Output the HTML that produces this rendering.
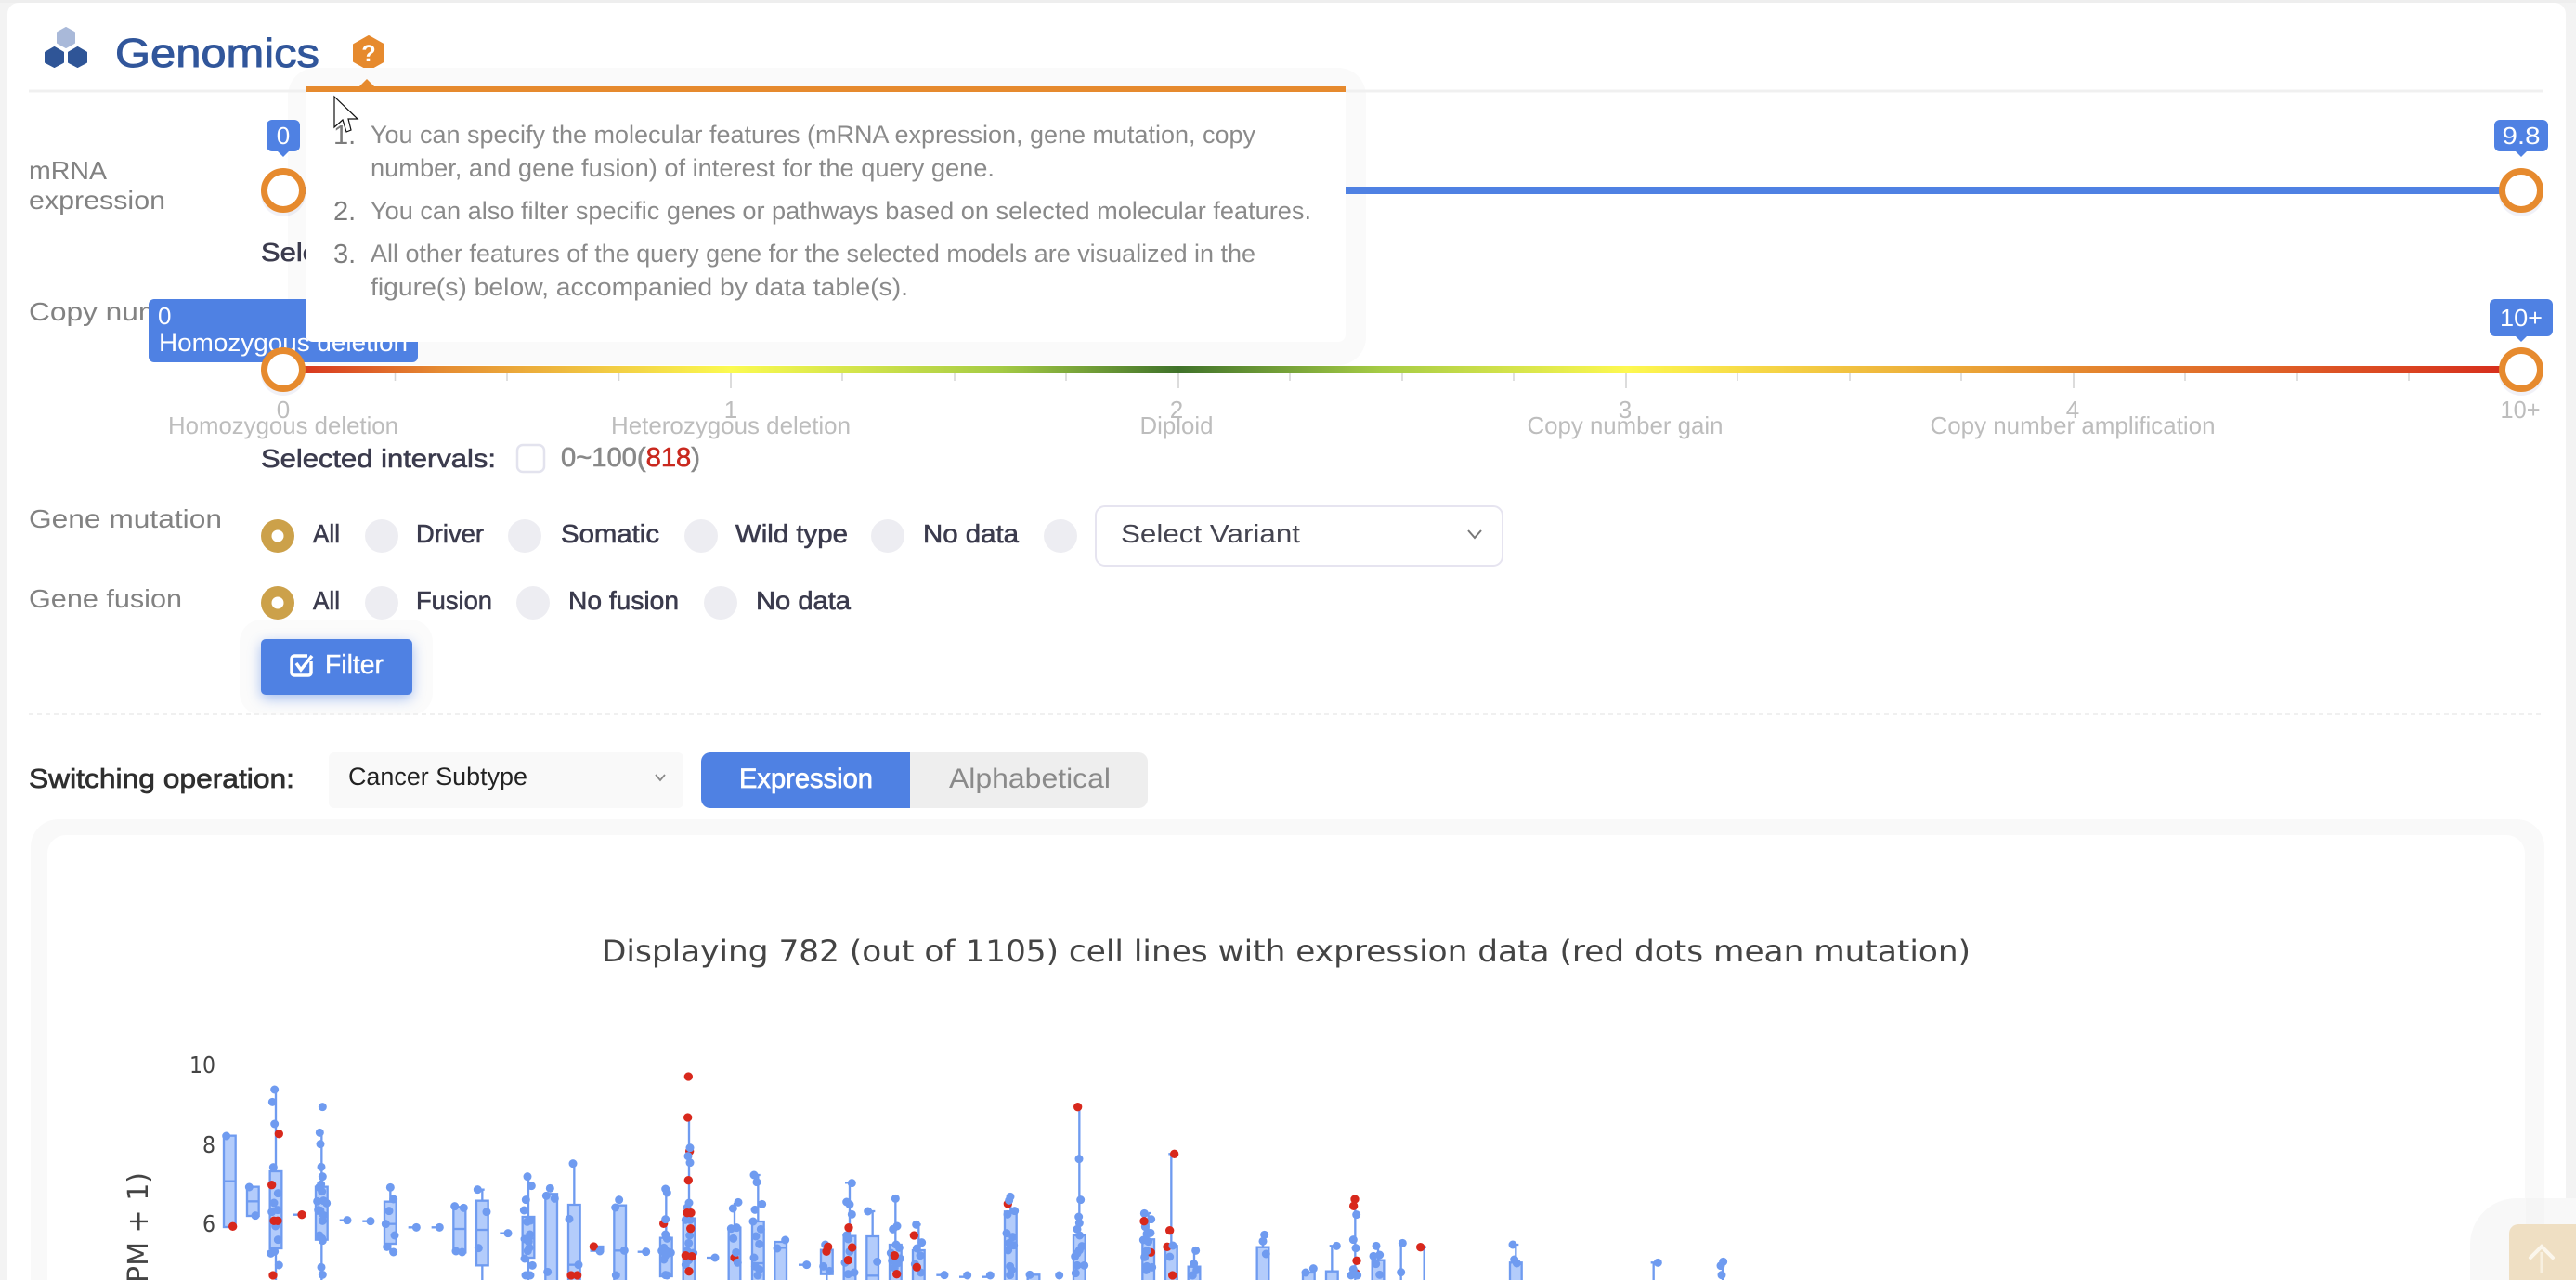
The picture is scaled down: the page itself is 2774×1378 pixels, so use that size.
<!DOCTYPE html>
<html lang="en">
<head>
<meta charset="utf-8">
<title>Genomics</title>
<style>
html,body{margin:0;padding:0;background:#f2f2f2;width:2774px;height:1378px;overflow:hidden}
svg{display:block;position:absolute;left:0;top:0}
text{font-family:"Liberation Sans",Arial,sans-serif}
.lab{font-size:28px;fill:#828282}
.opt{font-size:28px;fill:#3b3b4d;stroke:#3b3b4d;stroke-width:.6px}
.pop{font-size:27px;fill:#8a8a8a}
.num{font-size:29px;fill:#7c7c7c}
.mk{font-size:26px;fill:#bdbdbd;text-anchor:middle}
.tip{font-size:26px;fill:#fff}
.ch{font-family:"DejaVu Sans",sans-serif;fill:#444}
.b{fill:#b3ccfb;stroke:#6f9bf0;stroke-width:7}
.w{fill:none;stroke:#6f9bf0;stroke-width:7}
.d{fill:none;stroke:#6f9bf0;stroke-width:27;stroke-linecap:round}
.r{fill:none;stroke:#d8281c;stroke-width:28;stroke-linecap:round}
</style>
</head>
<body>
<svg width="2774" height="1378" viewBox="0 0 2774 1378" xmlns="http://www.w3.org/2000/svg">
<defs>
<linearGradient id="cn" gradientUnits="userSpaceOnUse" x1="305" y1="0" x2="2715" y2="0">
<stop offset="0" stop-color="#d62b1c"/>
<stop offset=".07" stop-color="#e58b32"/>
<stop offset=".2" stop-color="#fbfa50"/>
<stop offset=".32" stop-color="#a5cb45"/>
<stop offset=".4" stop-color="#40722a"/>
<stop offset=".49" stop-color="#a5cb45"/>
<stop offset=".6" stop-color="#fdf850"/>
<stop offset=".8" stop-color="#e58a30"/>
<stop offset="1" stop-color="#d62b1c"/>
</linearGradient>
<filter id="bl" x="-30%" y="-50%" width="160%" height="200%"><feGaussianBlur stdDeviation="7"/></filter>
</defs>

<!-- page + card -->
<rect x="0" y="0" width="2774" height="1378" fill="#f3f3f3"/>
<rect x="0" y="0" width="2774" height="3" fill="#eeeeee"/>
<path d="M8 1378V15a12 12 0 0 1 12-12H2751a12 12 0 0 1 12 12V1378Z" fill="#ffffff"/>

<!-- heading -->
<polygon points="71,30 80,35 80,46 71,51 62,46 62,35" fill="#a9b9d9" stroke="#a9b9d9" stroke-width="2" stroke-linejoin="round"/>
<polygon points="58.500,51 68,56.500 68,67 58.500,72 49,67 49,56.500" fill="#2f5597" stroke="#2f5597" stroke-width="2" stroke-linejoin="round"/>
<polygon points="83.500,51 93,56.500 93,67 83.500,72 74,67 74,56.500" fill="#2f5597" stroke="#2f5597" stroke-width="2" stroke-linejoin="round"/>
<text x="124" y="72" font-size="44" fill="#31569b" stroke="#31569b" stroke-width=".9" textLength="220" lengthAdjust="spacingAndGlyphs">Genomics</text>
<polygon points="397,39 413,48 413,66 397,75 381,66 381,48" fill="#e68a2e" stroke="#e68a2e" stroke-width="2" stroke-linejoin="round"/>
<text x="397" y="66" font-size="25" font-weight="bold" fill="#fff" text-anchor="middle">?</text>

<!-- popover halo -->
<rect x="310" y="73" width="1161" height="320" rx="30" fill="#fafafa"/>
<rect x="31" y="96.500" width="2708" height="3" fill="#f0f0f0"/>

<!-- mRNA -->
<text class="lab" x="31" y="193" textLength="84" lengthAdjust="spacingAndGlyphs">mRNA</text>
<text class="lab" x="31" y="225" textLength="147" lengthAdjust="spacingAndGlyphs">expression</text>
<rect x="305" y="201" width="2410" height="8" fill="#4f81e3"/>
<rect x="287" y="129" width="36" height="34" rx="6" fill="#4f81e3"/>
<polygon points="299,163 311,163 305,169" fill="#4f81e3"/>
<text class="tip" x="305" y="155" text-anchor="middle">0</text>
<rect x="2686" y="129" width="58" height="34" rx="6" fill="#4f81e3"/>
<polygon points="2709,163 2721,163 2715,169" fill="#4f81e3"/>
<text class="tip" x="2715" y="155" text-anchor="middle" textLength="41" lengthAdjust="spacingAndGlyphs">9.8</text>
<text class="opt" x="281" y="281" textLength="253" lengthAdjust="spacingAndGlyphs">Selected intervals:</text>
<circle cx="305" cy="209" r="24" fill="#8a8ac0" opacity=".12"/>
<circle cx="305" cy="205" r="20.500" fill="#fff" stroke="#e68a2e" stroke-width="7"/>
<circle cx="2715" cy="209" r="24" fill="#8a8ac0" opacity=".12"/>
<circle cx="2715" cy="205" r="20.500" fill="#fff" stroke="#e68a2e" stroke-width="7"/>

<!-- Copy number -->
<text class="lab" x="31" y="345" textLength="190" lengthAdjust="spacingAndGlyphs">Copy number</text>
<rect x="305" y="394" width="2410" height="8" fill="url(#cn)"/>
<path d="M425.500 402v8M546 402v8M666.500 402v8M907 402v8M1028 402v8M1148 402v8M1389 402v8M1510 402v8M1630 402v8M1871 402v8M1992 402v8M2112 402v8M2353 402v8M2474 402v8M2594 402v8" stroke="#d6d6d6" stroke-width="1.500" fill="none"/>
<path d="M787 402v16M1269 402v16M1751 402v16M2233 402v16" stroke="#d0d0d0" stroke-width="1.500" fill="none"/>
<text class="mk" x="305" y="450">0</text><text class="mk" x="787" y="450">1</text><text class="mk" x="1267" y="450">2</text><text class="mk" x="1750" y="450">3</text><text class="mk" x="2232" y="450">4</text><text class="mk" x="2714" y="450" textLength="43" lengthAdjust="spacingAndGlyphs">10+</text>
<text class="mk" x="305" y="467" textLength="248" lengthAdjust="spacingAndGlyphs">Homozygous deletion</text>
<text class="mk" x="787" y="467" textLength="258" lengthAdjust="spacingAndGlyphs">Heterozygous deletion</text>
<text class="mk" x="1267" y="467" textLength="79" lengthAdjust="spacingAndGlyphs">Diploid</text>
<text class="mk" x="1750" y="467" textLength="211" lengthAdjust="spacingAndGlyphs">Copy number gain</text>
<text class="mk" x="2232" y="467" textLength="307" lengthAdjust="spacingAndGlyphs">Copy number amplification</text>

<rect x="160" y="322" width="290" height="68" rx="6" fill="#4f81e3"/>
<text x="170" y="349" font-size="26" fill="#fff">0</text>
<text x="171" y="378" font-size="27" fill="#fff" textLength="268" lengthAdjust="spacingAndGlyphs">Homozygous deletion</text>
<rect x="2681" y="322" width="68" height="40" rx="6" fill="#4f81e3"/>
<polygon points="2709,362 2721,362 2715,368" fill="#4f81e3"/>
<text class="tip" x="2715" y="351" text-anchor="middle" textLength="46" lengthAdjust="spacingAndGlyphs">10+</text>

<!-- popover -->
<path d="M329 99H1449V360a8 8 0 0 1-8 8H337a8 8 0 0 1-8-8Z" fill="#fff"/>
<rect x="329" y="93" width="1120" height="6" fill="#e68a2e"/>
<polygon points="395,85 387,93 403,93" fill="#e68a2e"/>
<text class="num" x="359" y="155">1.</text>
<text class="num" x="359" y="237">2.</text>
<text class="num" x="359" y="283">3.</text>
<text class="pop" x="399" y="154" textLength="953" lengthAdjust="spacingAndGlyphs">You can specify the molecular features (mRNA expression, gene mutation, copy</text>
<text class="pop" x="399" y="190" textLength="672" lengthAdjust="spacingAndGlyphs">number, and gene fusion) of interest for the query gene.</text>
<text class="pop" x="399" y="236" textLength="1013" lengthAdjust="spacingAndGlyphs">You can also filter specific genes or pathways based on selected molecular features.</text>
<text class="pop" x="399" y="282" textLength="953" lengthAdjust="spacingAndGlyphs">All other features of the query gene for the selected models are visualized in the</text>
<text class="pop" x="399" y="318" textLength="579" lengthAdjust="spacingAndGlyphs">figure(s) below, accompanied by data table(s).</text>
<polygon points="360,104 360,137 369,129 373,142 378,140 375,128 385,128" fill="#fff" stroke="#111" stroke-width="1.200"/>

<circle cx="305" cy="402" r="24" fill="#8a8ac0" opacity=".12"/>
<circle cx="305" cy="398" r="20.500" fill="#fff" stroke="#e68a2e" stroke-width="7"/>
<circle cx="2715" cy="402" r="24" fill="#8a8ac0" opacity=".12"/>
<circle cx="2715" cy="398" r="20.500" fill="#fff" stroke="#e68a2e" stroke-width="7"/>

<!-- selected intervals row -->
<text class="opt" x="281" y="503" textLength="253" lengthAdjust="spacingAndGlyphs">Selected intervals:</text>
<rect x="557" y="479" width="29" height="29" rx="6" fill="#fff" stroke="#e3e3ee" stroke-width="2.500"/>
<text x="604" y="502" font-size="29" fill="#888" stroke="#888" stroke-width=".6" textLength="150" lengthAdjust="spacingAndGlyphs">0~100(<tspan fill="#c9281e" stroke="#c9281e">818</tspan>)</text>

<!-- gene mutation -->
<text class="lab" x="31" y="568" textLength="208" lengthAdjust="spacingAndGlyphs">Gene mutation</text>
<circle cx="299" cy="577" r="18" fill="#cca14a"/><circle cx="299" cy="577" r="6.500" fill="#fff"/>
<text class="opt" x="337" y="584" textLength="29" lengthAdjust="spacingAndGlyphs">All</text>
<circle cx="411" cy="577" r="18" fill="#ededf2"/>
<text class="opt" x="448" y="584" textLength="73" lengthAdjust="spacingAndGlyphs">Driver</text>
<circle cx="565" cy="577" r="18" fill="#ededf2"/>
<text class="opt" x="604" y="584" textLength="106" lengthAdjust="spacingAndGlyphs">Somatic</text>
<circle cx="755" cy="577" r="18" fill="#ededf2"/>
<text class="opt" x="792" y="584" textLength="121" lengthAdjust="spacingAndGlyphs">Wild type</text>
<circle cx="956" cy="577" r="18" fill="#ededf2"/>
<text class="opt" x="994" y="584" textLength="103" lengthAdjust="spacingAndGlyphs">No data</text>
<circle cx="1142" cy="577" r="18" fill="#ededf2"/>
<rect x="1180" y="545" width="438" height="64" rx="10" fill="#fff" stroke="#e6e4f0" stroke-width="2"/>
<text x="1207" y="584" font-size="28" fill="#444450" textLength="193" lengthAdjust="spacingAndGlyphs">Select Variant</text>
<path d="M1581 571l7 8 7-8" fill="none" stroke="#777" stroke-width="2"/>

<!-- gene fusion -->
<text class="lab" x="31" y="654" textLength="165" lengthAdjust="spacingAndGlyphs">Gene fusion</text>
<circle cx="299" cy="649" r="18" fill="#cca14a"/><circle cx="299" cy="649" r="6.500" fill="#fff"/>
<text class="opt" x="337" y="656" textLength="29" lengthAdjust="spacingAndGlyphs">All</text>
<circle cx="411" cy="649" r="18" fill="#ededf2"/>
<text class="opt" x="448" y="656" textLength="82" lengthAdjust="spacingAndGlyphs">Fusion</text>
<circle cx="574" cy="649" r="18" fill="#ededf2"/>
<text class="opt" x="612" y="656" textLength="119" lengthAdjust="spacingAndGlyphs">No fusion</text>
<circle cx="776" cy="649" r="18" fill="#ededf2"/>
<text class="opt" x="814" y="656" textLength="102" lengthAdjust="spacingAndGlyphs">No data</text>

<!-- filter -->
<rect x="258" y="667" width="208" height="103" rx="24" fill="#fbfbfb"/>
<rect x="281" y="692" width="163" height="60" rx="6" fill="#4f81e3" opacity=".5" filter="url(#bl)"/>
<rect x="281" y="688" width="163" height="60" rx="5" fill="#4f81e3"/>
<path d="M335 712V724a3 3 0 0 1-3 3H317a3 3 0 0 1-3-3V709a3 3 0 0 1 3-3H331" fill="none" stroke="#fff" stroke-width="3.500"/>
<path d="M319 714l5 7 12-15" fill="none" stroke="#fff" stroke-width="3.500"/>
<text x="350" y="725" font-size="29" fill="#fff" stroke="#fff" stroke-width=".4" textLength="63" lengthAdjust="spacingAndGlyphs">Filter</text>

<path d="M31 769H2739" stroke="#ececec" stroke-width="1.500" stroke-dasharray="5 4" fill="none"/>

<!-- switching -->
<text x="31" y="848" font-size="29" fill="#2f2f2f" stroke="#2f2f2f" stroke-width=".7" textLength="286" lengthAdjust="spacingAndGlyphs">Switching operation:</text>
<rect x="354" y="810" width="382" height="60" rx="6" fill="#f9f9f9"/>
<text x="375" y="845" font-size="27" fill="#222" textLength="193" lengthAdjust="spacingAndGlyphs">Cancer Subtype</text>
<path d="M706 834l5 6 5-6" fill="none" stroke="#888" stroke-width="1.800"/>
<path d="M765 810H980V870H765a10 10 0 0 1-10-10V820a10 10 0 0 1 10-10Z" fill="#4f81e3"/>
<path d="M980 810H1226a10 10 0 0 1 10 10V860a10 10 0 0 1-10 10H980Z" fill="#eeeeee"/>
<text x="796" y="848" font-size="30" fill="#fff" stroke="#fff" stroke-width=".7" textLength="144" lengthAdjust="spacingAndGlyphs">Expression</text>
<text x="1022" y="848" font-size="30" fill="#8a8a8a" textLength="174" lengthAdjust="spacingAndGlyphs">Alphabetical</text>

<!-- chart container -->
<path d="M33 1378V912a30 30 0 0 1 30-30H2710a30 30 0 0 1 30 30V1378Z" fill="#f9f9f9"/>
<path d="M51 1378V919a20 20 0 0 1 20-20H2699a20 20 0 0 1 20 20V1378Z" fill="#fff"/>

<text class="ch" x="648" y="1035" font-size="32" textLength="1474" lengthAdjust="spacingAndGlyphs">Displaying 782 (out of 1105) cell lines with expression data (red dots mean mutation)</text>
<text class="ch" x="232" y="1155" font-size="25" text-anchor="end" textLength="28" lengthAdjust="spacingAndGlyphs">10</text>
<text class="ch" x="232" y="1241" font-size="25" text-anchor="end" textLength="14" lengthAdjust="spacingAndGlyphs">8</text>
<text class="ch" x="232" y="1326" font-size="25" text-anchor="end" textLength="14" lengthAdjust="spacingAndGlyphs">6</text>
<text class="ch" transform="translate(159,1262) rotate(-90)" font-size="30" text-anchor="end" xml:space="preserve">PM + 1)</text>

<!-- chart A -->
<g transform="translate(100,1130) scale(.33333)">
<path class="w" d="M591 130V744M739 268V744M961 445V491M961 627V655M1258 452V744M1240 452H1265M1407 410V744M647 533H675M797 551H822M871 554H897M1019 574H1045M1094 574H1120M1315 593H1341"/>
<rect class="b" x="423" y="278" width="38" height="295"/><path class="w" d="M423 425H461"/>
<rect class="b" x="498" y="443" width="38" height="94"/><path class="w" d="M498 490H536"/>
<rect class="b" x="572" y="393" width="38" height="249"/><path class="w" d="M572 520H610"/>
<rect class="b" x="720" y="443" width="38" height="171"/><path class="w" d="M720 530H758"/>
<rect class="b" x="942" y="491" width="38" height="136"/><path class="w" d="M942 563H980"/>
<rect class="b" x="1165" y="508" width="39" height="147"/><path class="w" d="M1165 579H1204"/>
<rect class="b" x="1239" y="488" width="38" height="209"/><path class="w" d="M1239 582H1277"/>
<rect class="b" x="1388" y="540" width="38" height="132"/><path class="w" d="M1388 610H1426"/>
<path class="b" d="M1462 744V466H1500V744"/>
<path class="d" d="M431 279h0M505 444h0M525 536h0M587 129h0M580 169h0M587 240h0M583 380h0M598 464h0M585 495h0M578 524h0M597 518h0M590 570h0M598 614h0M575 658h0M587 652h0M601 696h0M742 185h0M733 268h0M735 305h0M738 379h0M742 410h0M737 435h0M731 445h0M740 458h0M725 490h0M745 488h0M755 496h0M728 518h0M735 520h0M745 535h0M742 553h0M732 600h0M740 610h0M742 617h0M738 703h0M742 727h0M822 551h0M897 554h0M961 445h0M971 483h0M957 521h0M946 563h0M975 600h0M950 637h0M971 654h0M1045 574h0M1120 574h0M1169 506h0M1198 511h0M1173 651h0M1193 654h0M1243 452h0M1272 524h0M1246 641h0M1341 593h0M1404 410h0M1417 440h0M1399 485h0M1393 519h0M1403 556h0M1414 552h0M1395 612h0M1412 597h0M1408 620h0M1410 640h0M1405 650h0M1395 675h0M1420 697h0M1398 729h0M1413 729h0M1477 448h0M1465 472h0M1492 481h0M1469 718h0"/>
<path class="r" d="M452 571h0M601 272h0M578 437h0M585 553h0M597 553h0M582 729h0M675 533h0"/>
</g>

<!-- chart B -->
<g transform="translate(600,1130) scale(.33333)">
<path class="w" d="M55 368V501M352 450V608M426 219V744M573 495V575M573 493H592M649 405V555M630 405H656M871 725V744M945 430V602M930 430H960M1019 522V603M1000 522H1027M1093 481V630M1168 565V648M1150 565H1175M1225 728H1251M1299 734H1325M1373 734H1399M483 672H510M780 695H806M260 653H287M1465 475V523"/>
<path class="b" d="M36 744V501H74V744"/><path class="w" d="M36 695H74"/>
<rect class="b" x="110" y="636" width="38" height="14"/>
<path class="b" d="M184 744V503H222V744"/><path class="w" d="M184 649H222"/>
<rect class="b" x="333" y="608" width="38" height="124"/>
<path class="b" d="M407 744V545H445V744"/>
<path class="b" d="M554 744V575H592V744"/>
<path class="b" d="M630 744V555H668V744"/><path class="w" d="M630 690H668"/>
<path class="b" d="M703 744V621H741V744"/><path class="w" d="M703 640H741"/>
<rect class="b" x="852" y="647" width="38" height="78"/>
<path class="b" d="M926 744V602H964V744"/>
<path class="b" d="M1000 744V603H1038V744"/><path class="w" d="M1000 730H1038"/>
<path class="b" d="M1074 744V630H1112V744"/>
<path class="b" d="M1149 744V648H1187V744"/>
<path class="b" d="M1446 744V523H1484V744"/>
<path class="r" d="M45 729h0M65 729h0M118 636h0M344 562h0M424 87h0M422 219h0M428 328h0M424 422h0M573 672h0M1456 498h0"/>
<path class="d" d="M51 368h0M39 547h0M69 695h0M138 651h0M200 485h0M188 510h0M217 649h0M190 729h0M287 653h0M350 450h0M355 462h0M350 548h0M350 597h0M355 610h0M345 640h0M352 650h0M367 656h0M338 650h0M350 665h0M345 678h0M350 728h0M355 729h0M429 317h0M423 344h0M429 365h0M426 495h0M420 510h0M415 550h0M430 550h0M428 600h0M425 625h0M440 657h0M420 650h0M415 695h0M425 680h0M510 672h0M585 493h0M568 513h0M562 578h0M580 575h0M569 610h0M578 655h0M583 688h0M636 405h0M645 428h0M662 499h0M639 517h0M633 555h0M658 580h0M642 603h0M653 628h0M636 672h0M640 700h0M653 710h0M648 729h0M737 615h0M711 642h0M806 695h0M866 630h0M860 700h0M880 715h0M952 431h0M935 492h0M945 500h0M952 532h0M935 600h0M940 612h0M945 652h0M930 688h0M960 720h0M940 725h0M1004 522h0M1034 685h0M1093 481h0M1098 570h0M1085 580h0M1095 630h0M1105 640h0M1078 657h0M1108 675h0M1082 682h0M1100 690h0M1090 705h0M1160 565h0M1178 623h0M1162 642h0M1173 665h0M1156 693h0M1175 720h0M1251 728h0M1325 729h0M1399 729h0M1464 475h0M1460 487h0M1478 521h0M1455 532h0M1452 593h0M1472 605h0M1460 625h0M1475 632h0M1457 648h0M1463 700h0M1468 712h0M1463 728h0"/>
<path class="r" d="M420 527h0M432 527h0M431 578h0M415 665h0M435 668h0M426 716h0M875 637h0M870 652h0M942 575h0M953 639h0M940 680h0M1090 665h0M1097 725h0M1153 600h0M1162 703h0"/>
</g>

<!-- chart C -->
<g transform="translate(1100,1130) scale(.33333)">
<path class="w" d="M187 185V600M410 528V613M410 528H419M484 337V634M475 337H500M558 650V701M780 600V638M1003 634V716M995 634H1018M1078 483V744M1152 634V680M1226 625V744M1218 625H1240M1301 638V744M1289 638H1308"/>
<path class="b" d="M20 744V727H58V744"/>
<path class="b" d="M168 744V600H206V744"/>
<path class="b" d="M391 744V613H429V744"/>
<path class="b" d="M465 744V634H503V744"/>
<path class="b" d="M539 744V701H577V744"/>
<path class="b" d="M761 744V638H799V744"/>
<path class="b" d="M909 744V720H947V744"/>
<path class="b" d="M984 744V716H1022V744"/>
<path class="b" d="M1133 744V680H1171V744"/>
<path class="r" d="M418 655h0M471 637h0M1080 722h0"/>
<path class="d" d="M27 727h0M122 729h0M186 353h0M191 485h0M185 540h0M187 560h0M180 580h0M188 600h0M195 635h0M187 648h0M180 658h0M173 668h0M180 697h0M203 697h0M175 722h0M397 529h0M419 548h0M400 572h0M417 592h0M405 595h0M394 615h0M410 620h0M405 650h0M398 670h0M405 700h0M422 703h0M403 712h0M489 633h0M479 669h0M563 649h0M557 692h0M566 712h0M553 729h0M785 598h0M780 619h0M790 660h0M918 720h0M943 707h0M1018 634h0M1082 533h0M1072 614h0M1080 641h0M1072 710h0M1065 729h0M1085 729h0M1146 634h0M1137 667h0M1157 663h0M1145 692h0M1157 727h0M1231 625h0M1226 719h0"/>
<path class="r" d="M182 185h0M396 554h0M494 337h0M479 584h0M488 729h0M1077 483h0M1073 505h0M1083 682h0M1289 638h0"/>
</g>

<!-- chart D -->
<g transform="translate(1600,1230) scale(.33333)">
<path class="w" d="M97 330V388M87 330H106M542 388V444M533 388H556M765 385V444"/>
<path class="b" d="M78 444V388H116V444"/>
<path class="d" d="M87 330h0M92 378h0M100 390h0M556 388h0M767 385h0M759 398h0M762 428h0"/>
</g>

<!-- scroll to top -->
<path d="M2660 1378V1340a50 50 0 0 1 50-50H2774V1378Z" fill="#f8f8f8"/>
<rect x="2720" y="1290" width="20" height="30" fill="#f5f5f5"/>
<path d="M2702 1378V1328a10 10 0 0 1 10-10H2774V1378Z" fill="#efdfc3"/>
<path d="M2725 1354L2737 1342 2749 1354" fill="none" stroke="#fbf6ec" stroke-width="4" stroke-linecap="round"/>
<path d="M2737 1348V1370" fill="none" stroke="#f8f0e0" stroke-width="3"/>
</svg>
</body>
</html>
